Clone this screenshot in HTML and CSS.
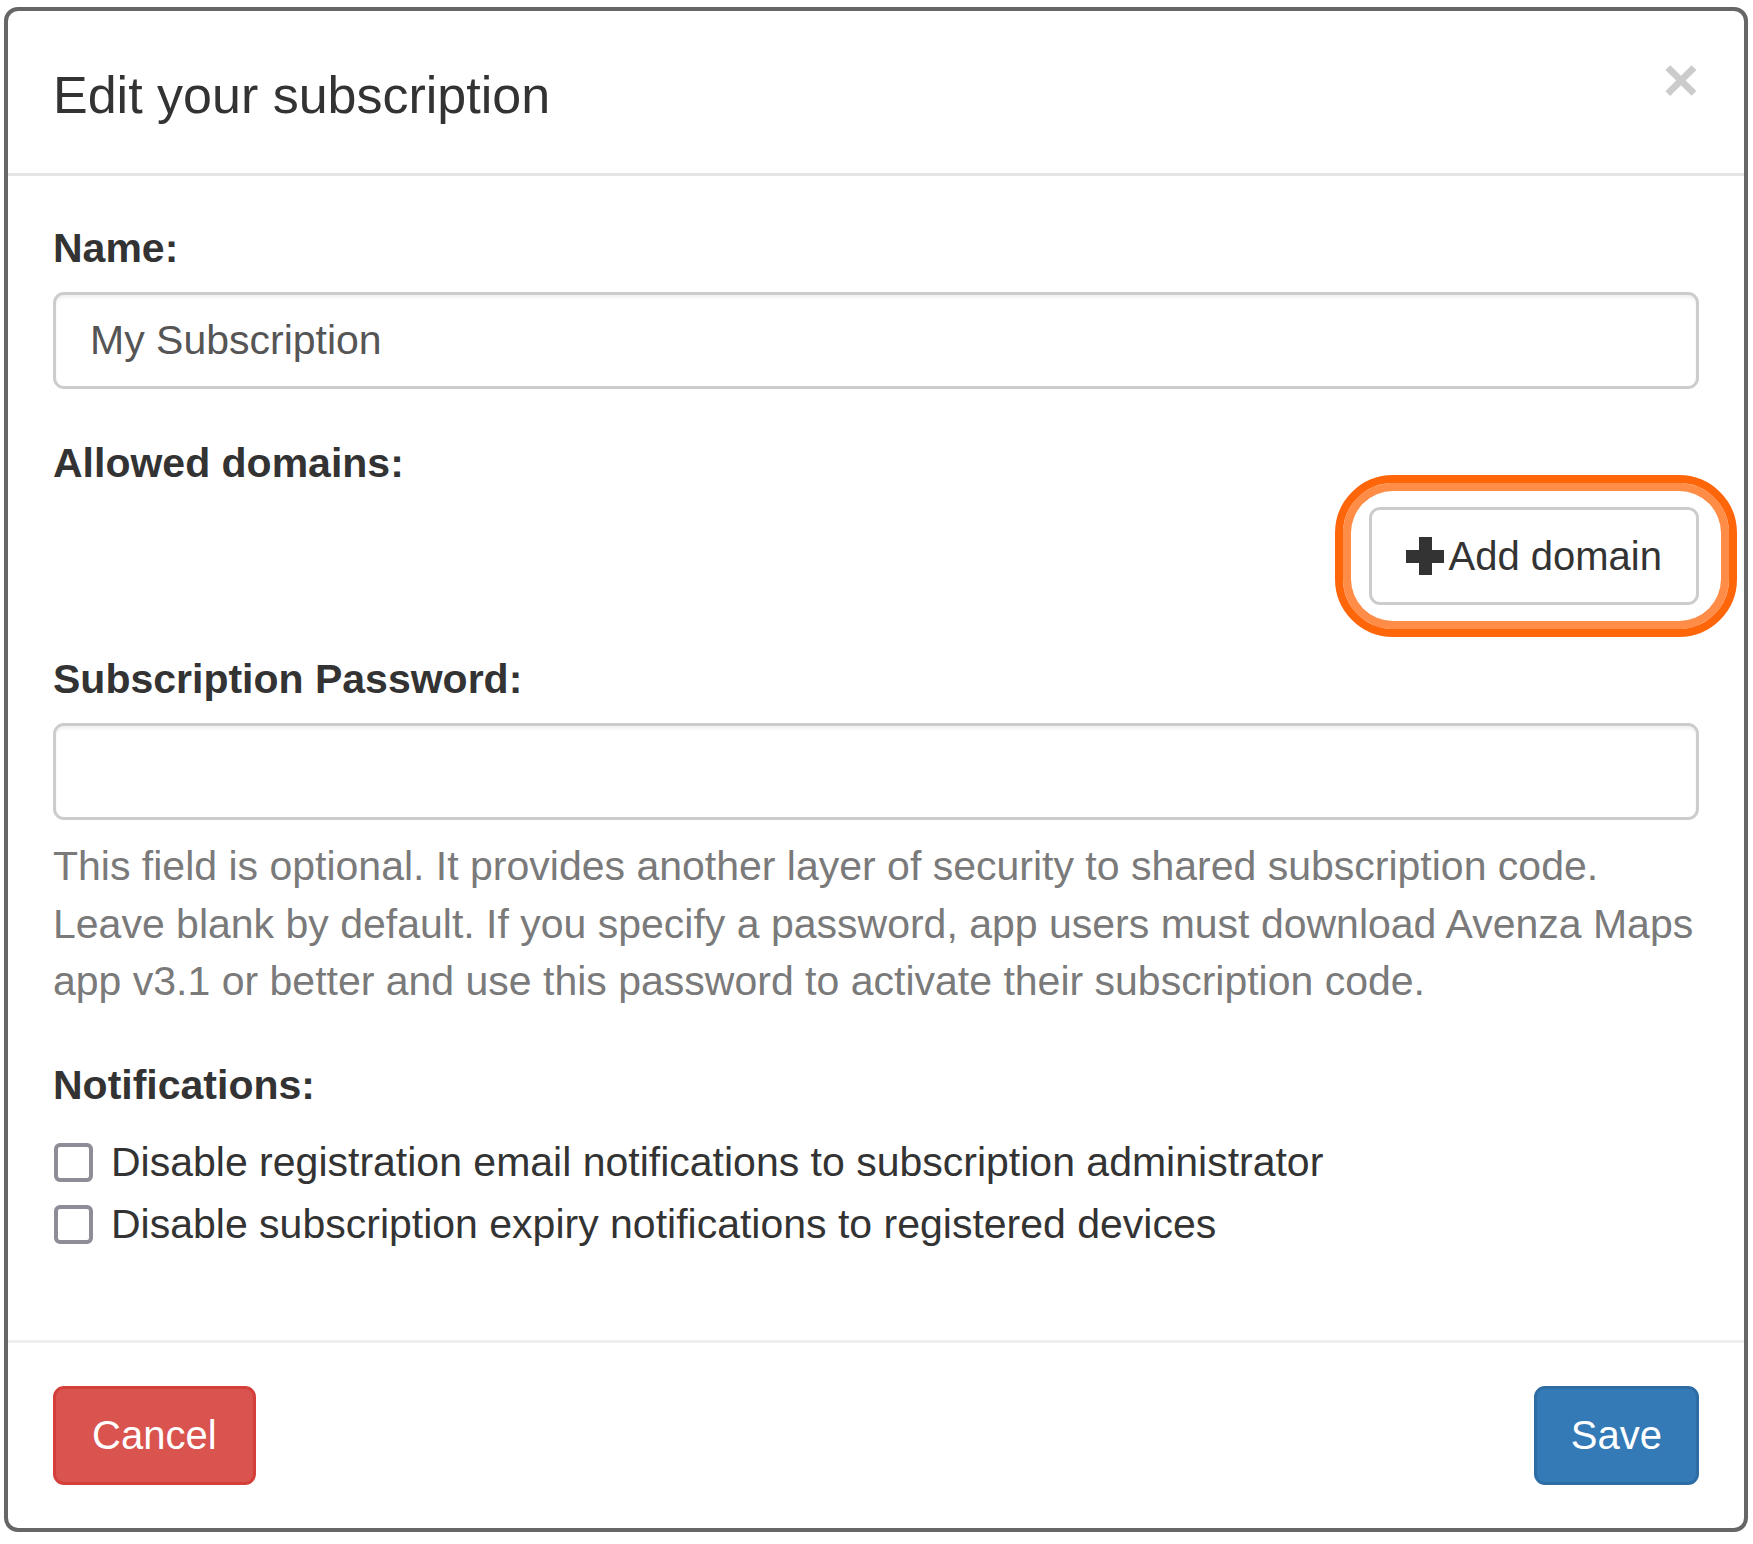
FILE: index.html
```html
<!DOCTYPE html>
<html lang="en">
<head>
  <meta charset="UTF-8">
  <meta name="viewport" content="width=device-width, initial-scale=1.0">
  <title>Edit your subscription</title>
  <link rel="stylesheet" href="styles.css">
</head>
<body>
  <div class="modal-content">
    <div class="modal-header">
      <h4 class="modal-title">Edit your subscription</h4>
      <button type="button" class="close" aria-label="Close">&times;</button>
    </div>

    <div class="modal-body">
      <div class="form-group">
        <label for="sub-name">Name:</label>
        <input type="text" id="sub-name" class="form-control" value="My Subscription">
      </div>

      <div class="form-group">
        <label>Allowed domains:</label>
        <div class="domain-actions">
          <div class="highlight-wrap">
            <button type="button" class="btn btn-default">
              <svg class="icon-plus" viewBox="0 0 40 40" aria-hidden="true">
                <rect x="14" y="1" width="13" height="38" />
                <rect x="1" y="14" width="38" height="13" />
              </svg>
              <span>Add domain</span>
            </button>
            <span class="highlight-ring"></span>
          </div>
        </div>
      </div>

      <div class="form-group">
        <label for="sub-password">Subscription Password:</label>
        <input type="password" id="sub-password" class="form-control">
        <p class="help-block">This field is optional. It provides another layer of security to shared subscription code. Leave blank by default. If you specify a password, app users must download Avenza Maps app v3.1 or better and use this password to activate their subscription code.</p>
      </div>

      <div class="form-group">
        <label>Notifications:</label>
        <div class="checkbox-list">
          <label class="checkbox">
            <input type="checkbox">
            <span>Disable registration email notifications to subscription administrator</span>
          </label>
          <label class="checkbox">
            <input type="checkbox">
            <span>Disable subscription expiry notifications to registered devices</span>
          </label>
        </div>
      </div>
    </div>

    <div class="modal-footer">
      <button type="button" class="btn btn-danger">Cancel</button>
      <button type="button" class="btn btn-primary">Save</button>
    </div>
  </div>
</body>
</html>
```

FILE: styles.css
```css
:root {
  --text-color: #333333;
  --muted-color: #7a7a7a;
  --input-border: #cccccc;
  --divider: #e5e5e5;
  --danger: #d9534f;
  --primary: #337ab7;
  --accent: #ff660a;
  --accent-light: #ff8c47;
}

* {
  box-sizing: border-box;
}

html, body {
  margin: 0;
  padding: 0;
  background: #ffffff;
}

body {
  padding: 7px 5px 13px 4px;
  font-family: "Liberation Sans", Arial, Helvetica, sans-serif;
  font-size: 41px;
  line-height: 57px;
  color: var(--text-color);
}

/* Dialog shell */
.modal-content {
  width: 1744px;
  background: #ffffff;
  border: 4px solid #666666;
  border-radius: 14px;
}

.modal-header {
  display: flex;
  justify-content: space-between;
  align-items: flex-start;
  padding: 47px 45px 41px;
  border-bottom: 3px solid var(--divider);
}

.modal-title {
  margin: 0;
  font-size: 52px;
  font-weight: normal;
  line-height: 74px;
}

.close {
  margin: -8px 0 0;
  padding: 0;
  border: 0;
  background: transparent;
  font-family: inherit;
  font-size: 62px;
  font-weight: bold;
  line-height: 60px;
  color: #000000;
  opacity: 0.2;
  text-shadow: 0 1px 0 #ffffff;
  cursor: pointer;
}

.modal-body {
  padding: 44px 45px 41px;
}

/* Form controls */
.form-group {
  margin-bottom: 46px;
}

.form-group > label {
  display: block;
  margin-bottom: 15px;
  font-weight: bold;
}

.form-control {
  display: block;
  width: 100%;
  height: 97px;
  padding: 0 34px;
  font-family: inherit;
  font-size: 41px;
  color: #555555;
  background: #ffffff;
  border: 3px solid var(--input-border);
  border-radius: 11px;
  box-shadow: inset 0 3px 3px rgba(0, 0, 0, 0.05);
}

.help-block {
  margin: 18px 0 0;
  line-height: 57.5px;
  color: var(--muted-color);
}

.checkbox-list {
  margin-top: 20px;
}

.checkbox {
  display: flex;
  align-items: center;
  gap: 18px;
  margin: 0 0 5px 1px;
  cursor: pointer;
}

.checkbox:last-child {
  margin-bottom: 0;
}

.checkbox input {
  appearance: none;
  -webkit-appearance: none;
  flex: none;
  width: 39px;
  height: 39px;
  margin: 0;
  background: #ffffff;
  border: 4px solid #8d8d97;
  border-radius: 6px;
}

/* Buttons */
.btn {
  display: inline-flex;
  align-items: center;
  height: 99px;
  padding: 0 34px;
  font-family: inherit;
  font-size: 40px;
  line-height: 1;
  border: 3px solid transparent;
  border-radius: 11px;
  cursor: pointer;
}

.btn-default {
  height: 98px;
  padding: 0 34px 0 33px;
  gap: 4px;
  color: var(--text-color);
  background: #ffffff;
  border-color: var(--input-border);
}

.btn-danger {
  padding: 0 36px;
  color: #ffffff;
  background: var(--danger);
  border-color: #d43f3a;
}

.btn-primary {
  color: #ffffff;
  background: var(--primary);
  border-color: #2e6da4;
}

.icon-plus {
  width: 40px;
  height: 40px;
  fill: var(--text-color);
}

/* Add domain row, with the callout ring drawn round the button */
.domain-actions {
  display: flex;
  justify-content: flex-end;
}

.highlight-wrap {
  position: relative;
}

.highlight-ring {
  position: absolute;
  top: -32px;
  right: -38px;
  bottom: -32px;
  left: -34px;
  border: 8px solid var(--accent);
  border-radius: 58px;
  box-shadow: inset 0 0 0 8px var(--accent-light);
  pointer-events: none;
}

.modal-footer {
  display: flex;
  justify-content: space-between;
  padding: 43px 45px;
  border-top: 3px solid #eeeeee;
}
```
